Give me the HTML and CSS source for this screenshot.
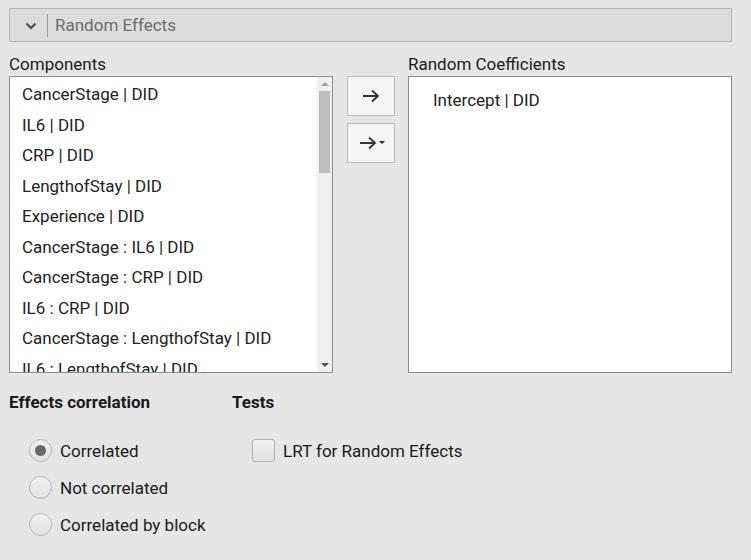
FILE: index.html
```html
<!DOCTYPE html>
<html>
<head>
<meta charset="utf-8">
<link rel="stylesheet" href="styles.css">
</head>
<body>
<div class="header">
  <span class="chev"><svg width="12" height="8" viewBox="0 0 12 8"><path d="M1.5 1.5 L6 6 L10.5 1.5" fill="none" stroke="#555" stroke-width="2.4"/></svg></span>
  <span class="sep"></span>
  <span class="title">Random Effects</span>
</div>
<div class="vars">
  <div class="col">
    <div class="label">Components</div>
    <div class="listbox source">
      <ul class="items">
        <li>CancerStage | DID</li>
        <li>IL6 | DID</li>
        <li>CRP | DID</li>
        <li>LengthofStay | DID</li>
        <li>Experience | DID</li>
        <li>CancerStage : IL6 | DID</li>
        <li>CancerStage : CRP | DID</li>
        <li>IL6 : CRP | DID</li>
        <li>CancerStage : LengthofStay | DID</li>
        <li>IL6 : LengthofStay | DID</li>
      </ul>
      <div class="scrollbar">
        <div class="sb-btn"><span class="tri-up"></span></div>
        <div class="thumb"></div>
        <div class="sb-fill"></div>
        <div class="sb-btn"><span class="tri-down"></span></div>
      </div>
    </div>
  </div>
  <div class="buttons">
    <button class="btn"><svg width="18" height="14" viewBox="0 0 18 14"><path d="M1 7 H16 M10 1.5 L16 7 L10 12.5" fill="none" stroke="#333" stroke-width="1.8"/></svg></button>
    <button class="btn"><svg width="18" height="14" viewBox="0 0 18 14"><path d="M1 7 H16 M10 1.5 L16 7 L10 12.5" fill="none" stroke="#333" stroke-width="1.8"/></svg><span class="caret"></span></button>
  </div>
  <div class="col">
    <div class="label">Random Coefficients</div>
    <div class="listbox target">
      <ul class="items">
        <li>Intercept | DID</li>
      </ul>
    </div>
  </div>
</div>
<div class="options">
  <div class="group corr">
    <div class="gtitle">Effects correlation</div>
    <div class="gbody">
      <div class="opt"><span class="radio checked"></span><span>Correlated</span></div>
      <div class="opt"><span class="radio"></span><span>Not correlated</span></div>
      <div class="opt"><span class="radio"></span><span>Correlated by block</span></div>
    </div>
  </div>
  <div class="group tests">
    <div class="gtitle">Tests</div>
    <div class="gbody">
      <div class="opt"><span class="check"></span><span>LRT for Random Effects</span></div>
    </div>
  </div>
</div>
</body>
</html>
```
FILE: styles.css
```css
* { box-sizing: border-box; }
body {
  margin: 0;
  background: #e6e6e6;
  font-family: Roboto, "Liberation Sans", sans-serif;
  font-size: 17px;
  color: #222;
  width: 751px;
  height: 560px;
  overflow: hidden;
}
.header {
  margin: 8px 0 0 9px;
  width: 723px;
  height: 34px;
  background: #dcdcdc;
  border: 1px solid #b5b5b5;
  display: flex;
  align-items: center;
}
.chev {
  width: 37px;
  display: flex;
  justify-content: center;
  padding-left: 4px;
  margin-top: 1px;
}
.sep {
  width: 1px;
  height: 23px;
  background: #999;
}
.title {
  margin-left: 7px;
  color: #6d6d6d;
}
.vars {
  display: flex;
  margin: 12px 0 0 9px;
}
.col {
  width: 324px;
  display: flex;
  flex-direction: column;
}
.label {
  line-height: 20px;
  height: 22px;
  color: #1a1a1a;
}
.listbox {
  height: 297px;
  background: #fff;
  border: 1px solid #8c8c8c;
  display: flex;
  overflow: hidden;
}
.items {
  list-style: none;
  margin: 0;
  padding: 2px 0 0 12px;
  flex: 1;
  overflow: hidden;
}
.items li {
  height: 30.5px;
  line-height: 30.5px;
  white-space: nowrap;
}
.target .items {
  padding: 8px 0 0 24px;
}
.scrollbar {
  width: 15px;
  background: #f0f0f0;
  display: flex;
  flex-direction: column;
  align-items: center;
}
.sb-btn {
  height: 14px;
  display: flex;
  align-items: center;
  justify-content: center;
}
.tri-up, .tri-down {
  width: 0; height: 0;
  border-left: 4px solid transparent;
  border-right: 4px solid transparent;
}
.tri-up { border-bottom: 4px solid #a0a0a0; }
.tri-down { border-top: 4px solid #505050; }
.thumb {
  width: 11px;
  height: 82px;
  background: #bdbdbd;
}
.sb-fill { flex: 1; }
.buttons {
  width: 75px;
  padding: 22px 0 0 14px;
  display: flex;
  flex-direction: column;
  gap: 7px;
}
.btn {
  width: 48px;
  height: 40px;
  background: #f6f6f6;
  border: 1px solid #b8b8b8;
  display: flex;
  align-items: center;
  justify-content: center;
  padding: 0;
  gap: 2px;
}
.btn:last-child { padding-left: 2px; }
.caret {
  width: 0; height: 0;
  border-left: 3px solid transparent;
  border-right: 3px solid transparent;
  border-top: 3px solid #222;
  margin-top: -1px;
}
.options {
  display: flex;
  margin: 19px 0 0 9px;
}
.group.corr { width: 223px; }
.gtitle {
  font-weight: bold;
  line-height: 20px;
  color: #1a1a1a;
}
.gbody {
  padding: 20px 0 0 20px;
  display: flex;
  flex-direction: column;
}
.opt {
  height: 37px;
  display: flex;
  align-items: center;
  gap: 8px;
  color: #1a1a1a;
}
.radio {
  width: 23px;
  height: 23px;
  border-radius: 50%;
  border: 1px solid #b3b3b3;
  background: linear-gradient(#f0f0f0, #e2e2e2);
  display: flex;
  align-items: center;
  justify-content: center;
}
.radio.checked::after {
  content: "";
  width: 11px;
  height: 11px;
  border-radius: 50%;
  background: #6a6a6a;
}
.check {
  width: 23px;
  height: 23px;
  border-radius: 3px;
  border: 1px solid #b3b3b3;
  background: linear-gradient(#f0f0f0, #e2e2e2);
}
```
